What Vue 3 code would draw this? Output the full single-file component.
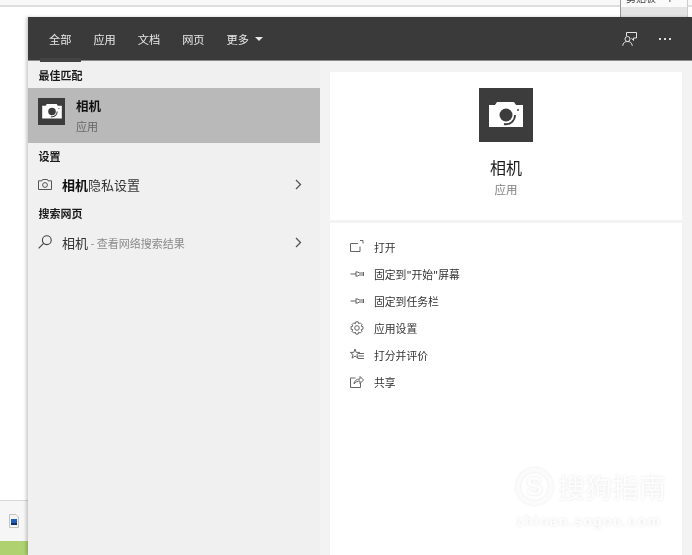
<script setup>
const tabs = ['全部', '应用', '文档', '网页']
const actions = [
  { label: '打开', icon: 'open' },
  { label: '固定到"开始"屏幕', icon: 'pin' },
  { label: '固定到任务栏', icon: 'pin' },
  { label: '应用设置', icon: 'gear' },
  { label: '打分并评价', icon: 'star' },
  { label: '共享', icon: 'share' }
]
</script>

<template>
  <div class="screen">
    <div class="backdrop">
      <div class="topbar">
        <div class="ribbon-tab">剪贴板 <span class="caret">↰</span></div>
      </div>
      <div class="doc"></div>
      <div class="status">
        <svg class="file" width="10" height="14" viewBox="0 0 10 14">
          <path d="M.5.5h6.500l2.500 2.500v10.500h-9z" fill="#f4f4f4" stroke="#c4c4c4" />
          <rect x="2" y="5" width="6" height="6" fill="#1f5fb8" />
          <rect x="2" y="9" width="6" height="2" fill="#12306a" />
        </svg>
      </div>
      <div class="green"></div>
    </div>

    <section class="panel">
      <header class="head">
        <nav class="tabs">
          <span v-for="(t, i) in tabs" :key="t" class="tab" :class="{ active: i === 0 }">{{ t }}</span>
          <span class="tab">更多<i class="tri"></i></span>
        </nav>
        <div class="head-icons">
          <svg width="15" height="14" viewBox="0 0 15 14" fill="none" stroke="#e4e4e4" stroke-width="1">
            <path d="M4.500 4V.5h10V6h-3v2.500L9.500 6.200" />
            <circle cx="5.500" cy="7" r="2.500" />
            <path d="M.7 13.800c.4-3 2.100-4.300 4.800-4.300s4.400 1.300 4.800 4.300" />
          </svg>
          <span class="dots"><i></i><i></i><i></i></span>
        </div>
      </header>

      <div class="body">
        <aside class="left">
          <h3 class="group first">最佳匹配</h3>
          <div class="best">
            <div class="app-icon small">
              <svg width="20" height="15" viewBox="0 0 34 26">
                <path d="M0 3h6l2-3h17l2 3h7v22H0z" fill="#fff" />
                <circle cx="17" cy="13" r="6.500" fill="#3c3c3c" />
                <path d="M26 13a9 9 0 0 1-11 9" fill="none" stroke="#3c3c3c" stroke-width="1.800" />
                <circle cx="29" cy="8" r="1" fill="#3c3c3c" />
              </svg>
            </div>
            <div class="best-text">
              <strong>相机</strong>
              <span>应用</span>
            </div>
          </div>

          <h3 class="group">设置</h3>
          <div class="row row-settings">
            <svg class="row-icon" width="14" height="11" viewBox="0 0 14 11" fill="none" stroke="#555">
              <path d="M.5 1.800h3.500l.6-1.300h4.800l.6 1.300h3.500v8.700H.5z" />
              <circle cx="7" cy="6" r="2.400" />
            </svg>
            <span class="row-text"><b>相机</b>隐私设置</span>
            <svg class="chev" width="7" height="11" viewBox="0 0 7 11" fill="none" stroke="#555" stroke-width="1.300">
              <path d="M1 1l4.500 4.500L1 10" />
            </svg>
          </div>

          <h3 class="group">搜索网页</h3>
          <div class="row">
            <svg class="row-icon" width="14" height="14" viewBox="0 0 14 14" fill="none" stroke="#444" stroke-width="1.100">
              <circle cx="8.800" cy="5.200" r="4.400" />
              <path d="M5.600 8.400L.6 13.400" />
            </svg>
            <span class="row-text">相机<small> - 查看网络搜索结果</small></span>
            <svg class="chev" width="7" height="11" viewBox="0 0 7 11" fill="none" stroke="#555" stroke-width="1.300">
              <path d="M1 1l4.500 4.500L1 10" />
            </svg>
          </div>
        </aside>

        <main class="right">
          <div class="card">
            <div class="hero">
              <div class="app-icon large">
                <svg width="34" height="26" viewBox="0 0 34 26">
                  <path d="M0 3h6l2-3h17l2 3h7v22H0z" fill="#fff" />
                  <circle cx="17" cy="13" r="6.500" fill="#3c3c3c" />
                  <path d="M26 13a9 9 0 0 1-11 9" fill="none" stroke="#3c3c3c" stroke-width="1.800" />
                  <circle cx="29" cy="8" r="1" fill="#3c3c3c" />
                </svg>
              </div>
              <div class="hero-name">相机</div>
              <div class="hero-kind">应用</div>
            </div>
            <ul class="actions">
              <li v-for="a in actions" :key="a.label">
                <svg width="14" height="14" viewBox="0 0 14 14" fill="none" stroke="#666">
                  <path v-if="a.icon === 'open'" d="M8 3.500H.5v8h9.500V6.500M10 .5h3V3.500" />
                  <path v-else-if="a.icon === 'pin'" d="M.5 7H6M6 4.500v5M6 5h2l1 1h4.500M6 9h2l1-1h4.500M13.500 5v4" />
                  <template v-else-if="a.icon === 'gear'">
                    <circle cx="7" cy="7" r="2.300" />
                    <path d="M5.800.8h2.400l.4 1.800 1.700-.7 1.700 1.700-.8 1.600 1.800.5v2.500l-1.800.5.800 1.600-1.700 1.700-1.700-.7-.4 1.800H5.800l-.4-1.800-1.700.7L2 10.300l.8-1.600L1 8.200V5.700l1.800-.5L2 3.600l1.700-1.700 1.700.7z" />
                  </template>
                  <path v-else-if="a.icon === 'star'" d="M5 1l1.200 3.400H9.700L6.900 6.600 8 10.200 5 8 2 10.200l1.100-3.600L.3 4.400h3.500zM9 5.500h5M8.500 8h5.500M8 10.500h6" />
                  <path v-else d="M5.500 3H.5v9.500h10V8M4 9c.3-3 2.200-5 6-5V1.500L13.500 5 10 8.500V6C7.500 6 5.200 7 4 9z" />
                </svg>
                <span>{{ a.label }}</span>
              </li>
            </ul>
            <div class="mark">
              <div class="mark-top"><span class="mark-s">S</span><span>搜狗指南</span></div>
              <div class="mark-url">zhinan.sogou.com</div>
            </div>
          </div>
        </main>
      </div>
    </section>
  </div>
</template>

<style>
html, body { margin: 0; padding: 0; background: #fff; overflow: hidden; }
</style>

<style scoped>
.screen {
  position: relative;
  width: 692px;
  height: 555px;
  overflow: hidden;
  font-family: "Noto Sans CJK SC", "Liberation Sans", sans-serif;
  filter: blur(.35px);
}
.backdrop { display: flex; flex-direction: column; height: 555px; background: #fff; }
.topbar {
  height: 5px;
  background: #f8f8f8;
  border-bottom: 2px solid #dedede;
  position: relative;
  flex: none;
}
.ribbon-tab {
  position: absolute;
  right: 4px;
  top: -9px;
  width: 68px;
  height: 26px;
  box-sizing: border-box;
  border-left: 1px solid #999;
  border-right: 1px solid #ccc;
  background: linear-gradient(#fafafa 0 16px, #e4e4e4 16px);
  font-size: 10px;
  line-height: 14px;
  color: #444;
  padding-left: 5px;
  white-space: nowrap;
}
.caret { margin-left: 6px; }
.doc { flex: 1; }
.status {
  height: 41px;
  flex: none;
  background: #f6f6f6;
  border-top: 1px solid #d8d8d8;
  box-sizing: border-box;
  padding: 13px 0 0 9px;
}
.file { display: block; }
.green { height: 14px; flex: none; background: #b0d170; }

.panel {
  position: absolute;
  left: 28px;
  top: 17px;
  width: 664px;
  height: 538px;
  background: #f2f2f2;
  box-shadow: -2px 0 3px rgba(0, 0, 0, .2);
  display: flex;
  flex-direction: column;
}
.head {
  height: 44px;
  flex: none;
  background: #3a3a3a;
  border-bottom: 1px solid #8a8a8a;
  box-sizing: border-box;
  display: flex;
  align-items: center;
  justify-content: space-between;
  padding: 0 21px;
}
.tabs { display: flex; gap: 22px; }
.tab {
  font-size: 11.2px;
  line-height: 16px;
  color: #e8e8e8;
  display: flex;
  align-items: center;
  position: relative;
}
.tab.active::after {
  content: "";
  position: absolute;
  left: -9px;
  right: -10px;
  top: 27px;
  height: 4px;
  background: #444;
}
.tri {
  width: 0;
  height: 0;
  margin-left: 6px;
  border-left: 4.500px solid transparent;
  border-right: 4.500px solid transparent;
  border-top: 4.500px solid #e8e8e8;
}
.head-icons { display: flex; align-items: center; gap: 22px; }
.head-icons svg { display: block; }
.dots { display: flex; gap: 3px; }
.dots i { width: 2px; height: 2px; background: #dcdcdc; display: block; }

.body { flex: 1; display: flex; min-height: 0; }
.left { width: 292px; flex: none; background: #f0f0f0; }
.group {
  margin: 0;
  font-size: 11px;
  line-height: 16px;
  height: 16px;
  font-weight: 700;
  color: #1a1a1a;
  padding: 5px 0 0 10.500px;
}
.group.first { padding-top: 6px; padding-bottom: 5px; }
.best {
  height: 55px;
  background: #b9b9b9;
  display: flex;
  align-items: flex-start;
  box-sizing: border-box;
  padding: 10px 0 0 10px;
}
.app-icon {
  background: #3c3c3c;
  display: flex;
  align-items: center;
  justify-content: center;
  flex: none;
}
.app-icon.small { width: 27px; height: 27px; }
.app-icon.large { width: 54px; height: 54px; }
.best-text { display: flex; flex-direction: column; margin-left: 11px; margin-top: -2px; }
.best-text strong { font-size: 12.500px; line-height: 20px; color: #111; }
.best-text span { font-size: 11px; line-height: 20px; color: #666; }
.row {
  display: flex;
  align-items: center;
  height: 37px;
  box-sizing: border-box;
  padding: 5px 0 0 10px;
}
.row-settings { height: 36px; }
.row-icon { flex: none; width: 14px; margin-right: 10px; }
.row-text { font-size: 13px; color: #333; white-space: nowrap; }
.row-text b { color: #111; }
.row-text small { font-size: 11px; color: #8a8a8a; }
.chev { margin-left: auto; margin-right: 18px; flex: none; }

.right { flex: 1; background: #f3f3f3; padding: 11px 10px 0; box-sizing: border-box; min-width: 0; }
.card { background: #fff; height: 100%; position: relative; }
.hero {
  height: 132px;
  border-bottom: 3px solid #f3f3f3;
  display: flex;
  flex-direction: column;
  align-items: center;
  padding-top: 16px;
}
.hero-name { font-size: 16px; line-height: 22px; color: #1a1a1a; margin-top: 14px; }
.hero-kind { font-size: 11.500px; line-height: 16px; color: #808080; margin-top: 3px; }
.actions { list-style: none; margin: 0; padding: 10px 0 0 20px; }
.actions li { display: flex; align-items: center; height: 27px; }
.actions svg { flex: none; margin-right: 10px; }
.actions span { font-size: 10.800px; color: #333; white-space: nowrap; }
.mark {
  position: absolute;
  left: 186px;
  top: 396px;
  color: #fdfdfd;
  text-shadow: 0 0 3px #e4e4e4;
}
.mark-top { display: flex; align-items: center; gap: 5px; font-size: 27px; line-height: 37px; }
.mark-s {
  width: 37px;
  height: 37px;
  border: 4px solid #fbfbfb;
  box-shadow: 0 0 3px #e4e4e4, inset 0 0 3px #e4e4e4;
  border-radius: 50%;
  box-sizing: border-box;
  font-size: 26px;
  line-height: 29px;
  text-align: center;
  font-weight: 700;
  font-family: "Liberation Sans", sans-serif;
}
.mark-url { font-size: 14px; line-height: 18px; font-family: "Liberation Sans", sans-serif; font-weight: 700; letter-spacing: 1.400px; margin-top: 7px; white-space: nowrap; }
</style>
